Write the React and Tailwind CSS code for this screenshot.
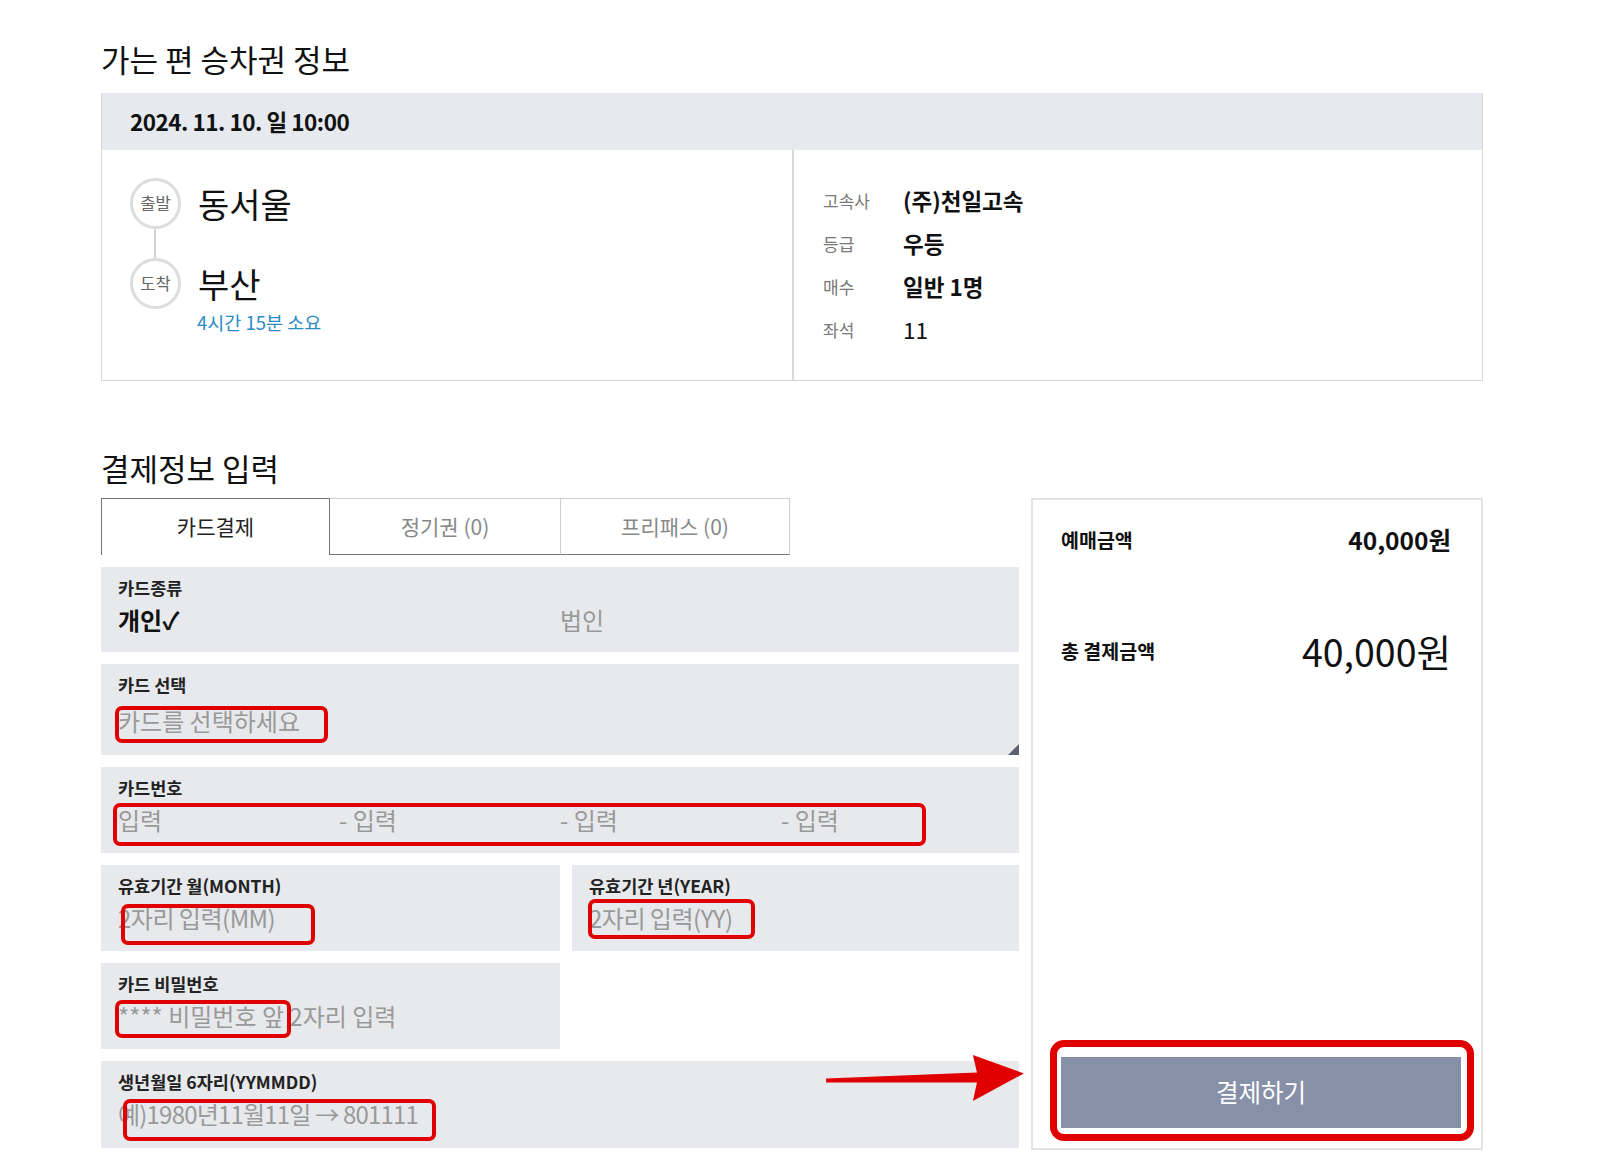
import React from 'react';

const RedBox = ({ className }) => (
  <div className={`pointer-events-none absolute rounded-[7px] border-[4.5px] border-[#e00000] ${className}`} />
);

function FormRow({ label, children, className = '', h = 'h-[86px]' }) {
  return (
    <div className={`relative bg-[#e7e9ec] ${h} px-[17px] pt-[10px] ${className}`}>
      <div className="text-[17.5px] leading-[22px] font-bold text-[#222]">{label}</div>
      <div className="mt-[5px] text-[24px] leading-[32px] text-[#999]">{children}</div>
    </div>
  );
}

function TicketInfo() {
  const rows = [
    ['고속사', '(주)천일고속', 'font-semibold'],
    ['등급', '우등', 'font-semibold'],
    ['매수', '일반 1명', 'font-semibold'],
    ['좌석', '11', 'font-normal'],
  ];
  return (
    <div className="border border-[#d9d9d9] border-t-0">
      <div className="h-[57px] bg-[#e6e9ed] pl-[28px] flex items-center">
        <span className="text-[22.5px] font-bold tracking-[-0.5px] text-[#111]">2024. 11. 10. 일 10:00</span>
      </div>
      <div className="flex h-[230px]">
        <div className="w-[692px] border-r-2 border-[#d9d9d9] pl-[28px] pt-[28px]">
          <div className="flex items-center gap-[17px]">
            <div className="w-[51px] h-[51px] rounded-full border-[3px] border-[#dcdcdc] flex items-center justify-center text-[16.5px] text-[#666]">출발</div>
            <span className="text-[34px] leading-[42px] text-[#111]">동서울</span>
          </div>
          <div className="ml-[24px] w-[2px] h-[29px] bg-[#d4d4d4]" />
          <div className="flex items-center gap-[17px]">
            <div className="w-[51px] h-[51px] rounded-full border-[3px] border-[#dcdcdc] flex items-center justify-center text-[16.5px] text-[#666]">도착</div>
            <span className="text-[34px] leading-[42px] text-[#111]">부산</span>
          </div>
          <div className="ml-[67px] text-[18.5px] leading-[26px] text-[#2b8bc3]">4시간 15분 소요</div>
        </div>
        <div className="flex-1 pl-[29px] pt-[29px]">
          {rows.map(([k, v, w]) => (
            <div key={k} className="flex items-center h-[43px]">
              <span className="w-[80px] text-[17px] text-[#777]">{k}</span>
              <span className={`text-[22.5px] text-[#111] ${w}`}>{v}</span>
            </div>
          ))}
        </div>
      </div>
    </div>
  );
}

function Tabs() {
  return (
    <div className="flex w-[689px] h-[57px]">
      <div className="w-[229px] border border-b-0 border-[#777] flex items-center justify-center text-[21px] text-[#222]">카드결제</div>
      <div className="w-[231px] border-t border-r border-[#cfcfcf] border-b border-b-[#777] flex items-center justify-center text-[21px] text-[#888]">정기권 (0)</div>
      <div className="flex-1 border-t border-r border-[#cfcfcf] border-b border-b-[#777] flex items-center justify-center text-[21px] text-[#888]">프리패스 (0)</div>
    </div>
  );
}

function PaymentForm() {
  return (
    <div className="w-[918px] flex flex-col">
      <Tabs />
      <div className="mt-[12px] flex flex-col gap-[12px]">
        <FormRow label="카드종류" h="h-[85px]">
          <div className="grid grid-cols-2">
            <span className="font-semibold text-[#111]">개인✓</span>
            <span className="text-[#999]">법인</span>
          </div>
        </FormRow>
        <FormRow label="카드 선택" h="h-[91px]">
          <span className="relative top-[4px]">카드를 선택하세요</span>
          <RedBox className="left-[14px] top-[42px] w-[213px] h-[37px]" />
          <svg className="absolute right-0 bottom-0" width="11" height="11" viewBox="0 0 11 11">
            <polygon points="11,0 11,11 0,11" fill="#5b6270" />
          </svg>
        </FormRow>
        <FormRow label="카드번호">
          <div className="grid grid-cols-4">
            <span>입력</span>
            <span>- 입력</span>
            <span>- 입력</span>
            <span>- 입력</span>
          </div>
          <RedBox className="left-[12px] top-[36px] w-[813px] h-[43px]" />
        </FormRow>
        <div className="flex gap-[12px]">
          <FormRow label="유효기간 월(MONTH)" className="w-[459px]">
            <span className="tracking-[-0.5px]">2자리 입력(MM)</span>
            <RedBox className="left-[20px] top-[39px] w-[194px] h-[41px]" />
          </FormRow>
          <FormRow label="유효기간 년(YEAR)" className="flex-1">
            <span className="tracking-[-0.5px]">2자리 입력(YY)</span>
            <RedBox className="left-[16px] top-[34px] w-[167px] h-[40px]" />
          </FormRow>
        </div>
        <FormRow label="카드 비밀번호" className="w-[459px]">
          <span>**** 비밀번호 앞 2자리 입력</span>
          <RedBox className="left-[14px] top-[37px] w-[176px] h-[38px]" />
        </FormRow>
        <FormRow label="생년월일 6자리(YYMMDD)" h="h-[87px]">
          <span className="tracking-[-0.8px]">예)1980년11월11일 → 801111</span>
          <RedBox className="left-[22px] top-[38px] w-[313px] h-[42px]" />
          <svg className="absolute left-[723px] top-[-10px]" width="202" height="53" viewBox="0 0 198 52">
            <polygon points="2,27 150,21 146,4 196,22 146,49 150,31 2,31" fill="#e00000" />
          </svg>
        </FormRow>
      </div>
    </div>
  );
}

function SummaryPanel() {
  return (
    <div className="w-[452px] h-[652px] border-2 border-[#e3e3e3] flex flex-col justify-between">
      <div className="pl-[28px] pr-[30px] pt-[24px]">
        <div className="flex items-center justify-between h-[32px]">
          <span className="text-[19.5px] font-bold text-[#111]">예매금액</span>
          <span className="text-[24.5px] font-bold text-[#111]">40,000원</span>
        </div>
        <div className="flex items-center justify-between h-[48px] mt-[71px]">
          <span className="text-[19.5px] font-bold text-[#111]">총 결제금액</span>
          <span className="text-[37.5px] text-[#111]">40,000원</span>
        </div>
      </div>
      <div className="relative ml-[28px] mr-[20px] mb-[20px] h-[71px]">
        <div className="pointer-events-none absolute left-[-11px] right-[-13px] top-[-17px] bottom-[-13px] rounded-[14px] border-[7px] border-[#e00000]" />
        <button type="button" className="w-full h-full bg-[#8690a7] text-white text-[24.5px]">결제하기</button>
      </div>
    </div>
  );
}

export default function App() {
  return (
    <div className="min-h-[1165px] bg-white font-['Noto_Sans_CJK_KR','Noto_Sans',sans-serif] text-[#111]">
      <div className="ml-[101px] w-[1382px] pt-[40px]">
        <h2 className="text-[31px] leading-[38px] text-[#111] mb-[15px]">가는 편 승차권 정보</h2>
        <TicketInfo />

        <h2 className="mt-[68px] text-[31px] leading-[38px] text-[#111] mb-[11px]">결제정보 입력</h2>
        <div className="flex gap-[12px]">
          <PaymentForm />
          <SummaryPanel />
        </div>
      </div>
    </div>
  );
}
